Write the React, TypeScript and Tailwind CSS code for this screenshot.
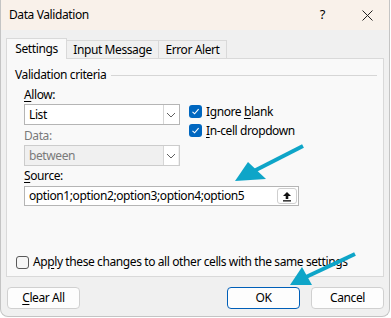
import React from "react";

const font = { fontFamily: '"Noto Sans", "Segoe UI", sans-serif' };

function Check({ checked }: { checked: boolean }) {
  if (checked)
    return (
      <span className="w-[13px] h-[13px] rounded-[3px] bg-[#0067c0] flex items-center justify-center shrink-0">
        <svg width="9" height="9" viewBox="0 0 9 9">
          <path d="M1.5 4.8 L3.6 6.8 L7.6 2.2" fill="none" stroke="white" strokeWidth="1.1" />
        </svg>
      </span>
    );
  return <span className="w-[13px] h-[13px] rounded-[3px] border border-[#5a5a5a] bg-[#f6f6f6] shrink-0" />;
}

function Chevron() {
  return (
    <svg width="10" height="6" viewBox="0 0 10 6">
      <path d="M1 1 L5 5 L9 1" fill="none" stroke="#606060" strokeWidth="1" />
    </svg>
  );
}

function Select({ value, disabled }: { value: string; disabled?: boolean }) {
  return (
    <div
      className={`h-[21px] w-[156px] border flex items-center ${
        disabled ? "bg-[#f0f0f0] border-[#cccccc] text-[#7a7a7a]" : "bg-white border-[#b5b5b5] text-black"
      }`}
    >
      <span className="pl-[4px] flex-1">{value}</span>
      <span className="w-[15px] h-[19px] bg-white border-l border-[#d6d6d6] flex items-center justify-center mr-[1px]">
        <Chevron />
      </span>
    </div>
  );
}

export default function App() {
  return (
    <div className="w-[391px] h-[318px] bg-white relative text-[12px] text-black tracking-[-0.4px]" style={font}>
      <div className="w-[390px] h-[317px] border border-[#c4c4c4] border-t-0 rounded-b-[8px] bg-[#f0f0f0] flex flex-col overflow-hidden">
        <div className="h-[30px] bg-[#f9f1ea] flex items-center pl-[8px] shrink-0">
          <span>Data Validation</span>
          <span className="ml-auto text-[13px] mr-[37px]">?</span>
          <svg width="11" height="11" viewBox="0 0 11 11" className="mr-[16px]">
            <path d="M0.5 0.5 L10.5 10.5 M10.5 0.5 L0.5 10.5" stroke="#222" strokeWidth="1" />
          </svg>
        </div>
        <div className="flex items-end pl-[5px] pt-[7px] h-[28px] shrink-0">
          <div className="h-[21px] w-[61px] bg-[#f9f9f9] border border-b-0 border-[#d9d9d9] flex items-center justify-center relative z-10 mb-[-1px]">
            Settings
          </div>
          <div className="h-[18px] w-[92px] bg-[#f0f0f0] border border-b-0 border-l-0 border-[#d9d9d9] flex items-center justify-center">
            Input Message
          </div>
          <div className="h-[18px] w-[68px] bg-[#f0f0f0] border border-b-0 border-l-0 border-[#d9d9d9] flex items-center justify-center">
            Error Alert
          </div>
        </div>
        <div className="ml-[5px] w-[378px] h-[219px] bg-[#f9f9f9] border border-[#d9d9d9] flex flex-col shrink-0">
          <div className="flex items-center pl-[8px] pr-[6px] mt-[8px] h-[16px]">
            <span>Validation criteria</span>
            <span className="flex-1 h-px bg-[#d6d6d6] ml-[5px]" />
          </div>
          <div className="flex pl-[17px] mt-[4px]">
            <div className="flex flex-col w-[156px]">
              <span className="h-[16px] leading-[16px]">
                <span className="underline underline-offset-2">A</span>llow:
              </span>
              <div className="mt-[1px]">
                <Select value="List" />
              </div>
              <span className="h-[16px] leading-[16px] mt-[3px] text-[#7a7a7a]">Data:</span>
              <div className="mt-[1px]">
                <Select value="between" disabled />
              </div>
            </div>
            <div className="flex flex-col ml-[9px] mt-[18px] gap-[6px]">
              <div className="flex items-center gap-[4px] h-[13px]">
                <Check checked />
                <span>
                  Ignore <span className="underline underline-offset-2">b</span>lank
                </span>
              </div>
              <div className="flex items-center gap-[4px] h-[13px]">
                <Check checked />
                <span>
                  <span className="underline underline-offset-2">I</span>n-cell dropdown
                </span>
              </div>
            </div>
          </div>
          <div className="pl-[17px] mt-[2px] flex flex-col">
            <span className="h-[16px] leading-[16px]">
              <span className="underline underline-offset-2">S</span>ource:
            </span>
            <div className="mt-[2px] w-[275px] h-[20px] bg-white border border-[#b5b5b5] flex items-center">
              <span className="pl-[4px] flex-1">option1;option2;option3;option4;option5</span>
              <span className="w-[20px] h-[16px] mr-[1px] bg-white border border-[#cfcfcf] rounded-[3px] flex items-center justify-center">
                <svg width="10" height="11" viewBox="0 0 10 11">
                  <path d="M5 1 L9 5 L6.3 5 L6.3 8 L3.7 8 L3.7 5 L1 5 Z" fill="#111" />
                  <rect x="1" y="9.2" width="8" height="1.3" fill="#111" />
                </svg>
              </span>
            </div>
          </div>
          <div className="flex-1" />
          <div className="flex items-center gap-[4px] pl-[9px] mb-[5px]">
            <Check checked={false} />
            <span>
              Ap<span className="underline underline-offset-2">p</span>ly these changes to all other cells with the same settings
            </span>
          </div>
        </div>
        <div className="flex items-center mt-[10px] pl-[6px] pr-[5px]">
          <button className="w-[73px] h-[22px] bg-[#fdfdfd] border border-[#d0d0d0] rounded-[4px] flex items-center justify-center">
            <span>
              <span className="underline underline-offset-2">C</span>lear All
            </span>
          </button>
          <button className="ml-auto w-[73px] h-[22px] bg-[#fdfdfd] border border-[#005fb8] rounded-[4px] flex items-center justify-center">
            OK
          </button>
          <button className="ml-[11px] w-[73px] h-[22px] bg-[#fdfdfd] border border-[#d0d0d0] rounded-[4px] flex items-center justify-center">
            Cancel
          </button>
        </div>
      </div>
      <svg className="absolute left-0 top-0 pointer-events-none" width="391" height="318" viewBox="0 0 391 318">
        <line x1="303" y1="146" x2="252" y2="172" stroke="#0ea5c8" strokeWidth="4" strokeLinecap="butt" />
        <polygon points="235,181 248,162 266,179" fill="#0ea5c8" />
        <line x1="355" y1="254" x2="306" y2="277" stroke="#0ea5c8" strokeWidth="4" />
        <polygon points="290,285 302,267 312,285" fill="#0ea5c8" />
      </svg>
    </div>
  );
}
